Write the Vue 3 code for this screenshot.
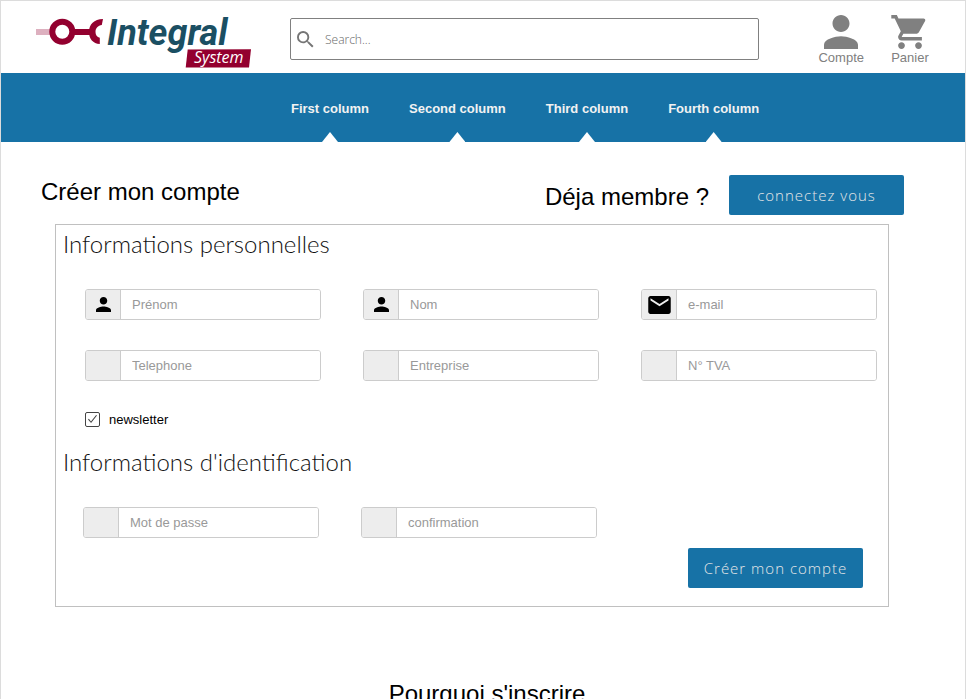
<script setup>
import { ref } from 'vue'

const columns = ['First column', 'Second column', 'Third column', 'Fourth column']

const personalFields = [
  { id: 'firstname', label: 'Prénom', type: 'text', icon: 'person' },
  { id: 'lastname', label: 'Nom', type: 'text', icon: 'person' },
  { id: 'email', label: 'e-mail', type: 'email', icon: 'mail' },
  { id: 'phone', label: 'Telephone', type: 'tel' },
  { id: 'company', label: 'Entreprise', type: 'text' },
  { id: 'vat', label: 'N° TVA', type: 'text' }
]

const loginFields = [
  { id: 'password', label: 'Mot de passe', type: 'password' },
  { id: 'confirm', label: 'confirmation', type: 'password' }
]

const newsletter = ref(true)
</script>

<template>
  <div class="page">
    <header class="header">
      <a href="#" class="logo" aria-label="Integral System">
        <svg width="216" height="54" viewBox="0 0 216 54">
          <rect x="0" y="14" width="15" height="6" fill="#ddb0bf" />
          <circle cx="26.3" cy="16.8" r="10" fill="none" stroke="#93002f" stroke-width="6" />
          <rect x="38" y="14" width="17" height="6" fill="#93002f" />
          <path
            d="M67 4 C58 4 53 9.500 53 17 C53 24 57 28.500 63.800 29 V22.800 C61 22 59.500 20 59.500 17 C59.500 13 62 10.500 65.800 10 Z"
            fill="#93002f"
          />
          <text x="71" y="30" class="logo-name">Integral</text>
          <path d="M151.700 34.600 L215 34.300 L213 52.500 L149.700 52.500 Z" fill="#93002f" />
          <text x="158" y="48" class="logo-sub">System</text>
        </svg>
      </a>
      <form class="search" role="search" @submit.prevent>
        <svg width="17" height="17" viewBox="3 3 18 18" fill="#757575" aria-hidden="true">
          <path
            d="M15.500 14h-.79l-.28-.27A6.471 6.471 0 0 0 16 9.500 6.500 6.500 0 1 0 9.500 16c1.610 0 3.090-.59 4.230-1.570l.27.28v.79l5 4.990L20.490 19l-4.990-5zm-6 0C7.010 14 5 11.990 5 9.500S7.010 5 9.500 5 14 7.010 14 9.500 11.990 14 9.500 14z"
          />
        </svg>
        <input type="search" placeholder="Search..." aria-label="Search" />
      </form>
      <nav class="shortcuts">
        <a href="#">
          <svg width="34" height="34" viewBox="4 4 16 16" fill="#808080" aria-hidden="true">
            <path
              d="M12 12c2.210 0 4-1.790 4-4s-1.790-4-4-4-4 1.790-4 4 1.790 4 4 4zm0 2c-2.670 0-8 1.340-8 4v2h16v-2c0-2.660-5.330-4-8-4z"
            />
          </svg>
          <span>Compte</span>
        </a>
        <a href="#">
          <svg width="38" height="34" viewBox="1 2 22 20" fill="#808080" aria-hidden="true">
            <path
              d="M7 18c-1.100 0-1.990.9-1.990 2S5.900 22 7 22s2-.9 2-2-.9-2-2-2zM1 2v2h2l3.600 7.590-1.350 2.450c-.16.28-.25.61-.25.96 0 1.100.9 2 2 2h12v-2H7.420c-.14 0-.25-.11-.25-.25l.03-.12.9-1.630h7.450c.75 0 1.410-.41 1.750-1.030l3.580-6.490c.08-.14.12-.31.12-.48 0-.55-.45-1-1-1H5.210l-.94-2H1zm16 16c-1.100 0-1.990.9-1.990 2s.89 2 1.990 2 2-.9 2-2-.9-2-2-2z"
            />
          </svg>
          <span>Panier</span>
        </a>
      </nav>
    </header>

    <nav class="menu">
      <a v-for="column in columns" :key="column" href="#">{{ column }}</a>
    </nav>

    <main>
      <div class="titles">
        <h1>Créer mon compte</h1>
        <div class="member">
          <h2>Déja membre ?</h2>
          <button type="button" class="primary">connectez vous</button>
        </div>
      </div>

      <form class="panel" @submit.prevent>
        <h3>Informations personnelles</h3>
        <div class="fields">
          <div v-for="field in personalFields" :key="field.id" class="field">
            <label :for="field.id" :aria-label="field.label">
              <svg v-if="field.icon === 'person'" width="15" height="15" viewBox="4 4 16 16" aria-hidden="true">
                <path
                  d="M12 12c2.210 0 4-1.790 4-4s-1.790-4-4-4-4 1.790-4 4 1.790 4 4 4zm0 2c-2.670 0-8 1.340-8 4v2h16v-2c0-2.660-5.330-4-8-4z"
                />
              </svg>
              <svg v-else-if="field.icon === 'mail'" width="23" height="18" viewBox="2 4 20 16" aria-hidden="true">
                <path
                  d="M20 4H4c-1.100 0-1.990.9-1.990 2L2 18c0 1.100.9 2 2 2h16c1.100 0 2-.9 2-2V6c0-1.100-.9-2-2-2zm0 4l-8 5-8-5V6l8 5 8-5v2z"
                />
              </svg>
            </label>
            <input :id="field.id" :type="field.type" :placeholder="field.label" />
          </div>
        </div>

        <label class="newsletter">
          <input v-model="newsletter" type="checkbox" />
          newsletter
        </label>

        <h3>Informations d'identification</h3>
        <div class="fields login">
          <div v-for="field in loginFields" :key="field.id" class="field">
            <label :for="field.id" :aria-label="field.label"></label>
            <input :id="field.id" :type="field.type" :placeholder="field.label" />
          </div>
        </div>

        <div class="actions">
          <button type="submit" class="primary">Créer mon compte</button>
        </div>
      </form>

      <h2 class="why">Pourquoi s'inscrire</h2>
    </main>
  </div>
</template>

<style>
body {
  margin: 0;
  background: #fff;
}
</style>

<style scoped>
.page,
.page * {
  box-sizing: border-box;
}

.page {
  min-height: 100vh;
  border: 1px solid #dcdcdc;
  font-family: "Liberation Sans", Arial, sans-serif;
  font-size: 13px;
  color: #000;
}

h1,
h2,
h3 {
  margin: 0;
  font-size: 24px;
  font-weight: 400;
}

a {
  text-decoration: none;
}

svg {
  display: block;
  flex: none;
}

.header {
  display: flex;
  align-items: flex-start;
  height: 72px;
  padding: 14px 36px 0 35px;
}

.logo-name {
  font: italic 700 36px Roboto, sans-serif;
  fill: #1b4f63;
}

.logo-sub {
  font: italic 400 16px "Open Sans", sans-serif;
  fill: #fff;
}

.search {
  display: flex;
  flex: 1;
  align-items: center;
  gap: 11px;
  height: 42px;
  margin: 3px 59px 0 38px;
  padding: 0 6px;
  border: 1px solid #808080;
  border-radius: 2px;
}

.search input {
  flex: 1;
  min-width: 0;
  padding: 0;
  border: 0;
  outline: 0;
  background: none;
  font: 300 12px "Open Sans", sans-serif;
}

.search input::placeholder {
  color: #666;
  opacity: 1;
}

.shortcuts {
  display: flex;
  gap: 27px;
}

.shortcuts a {
  display: flex;
  flex-direction: column;
  align-items: center;
  line-height: 18px;
  color: #808080;
}

.menu {
  display: flex;
  gap: 40px;
  height: 69px;
  padding-left: 290px;
  background: #1772a6;
}

.menu a {
  position: relative;
  line-height: 72px;
  font-weight: 700;
  color: #f2f2f2;
}

.menu a::after {
  content: "";
  position: absolute;
  bottom: 0;
  left: calc(50% - 8px);
  width: 16px;
  height: 10px;
  background: #fff;
  clip-path: polygon(50% 0, 100% 100%, 0 100%);
}

.titles {
  display: flex;
  align-items: flex-start;
  justify-content: space-between;
  padding: 33px 61px 0 40px;
}

.titles h1 {
  line-height: 34px;
}

.member {
  display: flex;
  align-items: center;
  gap: 20px;
}

.member h2 {
  line-height: 44px;
  height: 40px;
}

.primary {
  width: 175px;
  height: 40px;
  padding: 0;
  border: 0;
  border-radius: 2px;
  background: #1772a6;
  font: 300 15px "Open Sans", sans-serif;
  letter-spacing: 1px;
  color: #e6e6e6;
}

.panel {
  margin: 9px 76px 0 54px;
  padding: 5px 11px 18px 7px;
  border: 1px solid #c0c0c0;
}

.panel h3 {
  font-family: Lato, sans-serif;
  font-weight: 300;
  line-height: 28px;
  color: #111;
}

.fields {
  display: grid;
  grid-template-columns: repeat(3, 1fr);
  gap: 30px 42px;
  padding: 31px 0 0 22px;
}

.fields.login {
  padding: 31px 2px 0 20px;
}

.field {
  display: flex;
  height: 31px;
  border: 1px solid #ccc;
  border-radius: 3px;
  overflow: hidden;
}

.field label {
  display: flex;
  flex: none;
  align-items: center;
  justify-content: center;
  width: 35px;
  border-right: 1px solid #ccc;
  background: #ededed;
}

.field input {
  flex: 1;
  min-width: 0;
  padding: 0 11px;
  border: 0;
  outline: 0;
  font: inherit;
}

.field input::placeholder {
  color: #999;
  opacity: 1;
}

.newsletter {
  display: flex;
  align-items: center;
  gap: 9px;
  width: max-content;
  height: 16px;
  margin: 30px 0 21px 22px;
}

.newsletter input {
  appearance: none;
  display: grid;
  place-items: center;
  width: 15px;
  height: 15px;
  margin: 0;
  border: 1px solid #444;
  border-radius: 2px;
}

.newsletter input:checked::after {
  content: "";
  width: 9px;
  height: 8px;
  background: #444;
  clip-path: polygon(0 55%, 10% 48%, 33% 80%, 90% 0, 100% 6%, 34% 100%);
}

.actions {
  display: flex;
  justify-content: flex-end;
  padding: 10px 14px 0 0;
}

.why {
  margin-top: 71px;
  padding: 0 0 40px 8px;
  line-height: 32px;
  text-align: center;
}
</style>
